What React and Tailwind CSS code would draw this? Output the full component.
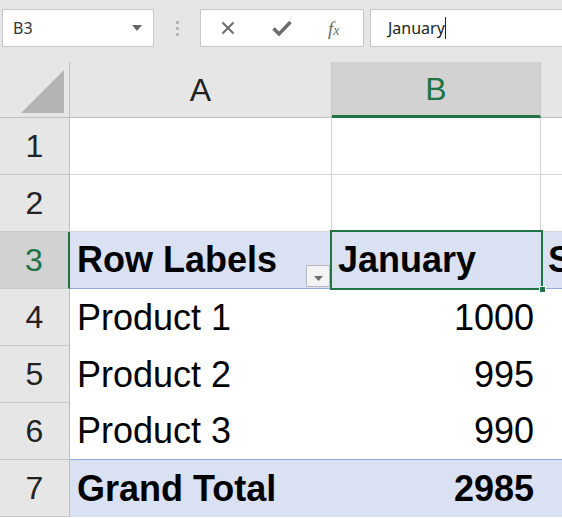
import React from "react";

const cellFont = { fontFamily: '"Liberation Sans", Arial, sans-serif' };

const RowHead = ({ n, active }) => (
  <div
    className={`flex items-center justify-center border-b border-[#c8c8c8] text-[32px] ${
      active
        ? "bg-[#d2d2d2] text-[#217346] border-r-2 border-r-[#217346]"
        : "bg-[#e6e6e6] text-[#222] border-r border-r-[#bdbdbd]"
    }`}
    style={cellFont}
  >
    {n}
  </div>
);

const FilterButton = () => (
  <div className="absolute right-[2px] bottom-[1px] w-[24px] h-[22px] bg-[#f4f4f4] border border-[#b8b8b8] flex items-end justify-center pb-[5px]">
    <svg width="9" height="5" viewBox="0 0 9 5">
      <path d="M0 0 L9 0 L4.5 5 Z" fill="#6e6e6e" />
    </svg>
  </div>
);

export default function App() {
  return (
    <div className="w-[562px] h-[518px] overflow-hidden bg-white" style={cellFont}>
      {/* Formula bar */}
      <div className="h-[62px] bg-[#e6e6e6] flex items-start pt-[9px]">
        <div className="ml-[2px] w-[152px] h-[38px] bg-white border border-[#c6c6c6] flex items-center justify-between pl-[10px] pr-[11px]">
          <span className="text-[16px] text-[#333]" style={{ fontFamily: '"Noto Sans", sans-serif' }}>
            B3
          </span>
          <svg width="10" height="6" viewBox="0 0 10 6">
            <path d="M0 0 L10 0 L5 6 Z" fill="#666" />
          </svg>
        </div>
        <div className="w-[46px] h-[38px] flex flex-col items-center justify-center gap-[3px]">
          <span className="w-[3px] h-[3px] bg-[#b5b5b5]" />
          <span className="w-[3px] h-[3px] bg-[#b5b5b5]" />
          <span className="w-[3px] h-[3px] bg-[#b5b5b5]" />
        </div>
        <div className="w-[164px] h-[38px] bg-white border border-[#c6c6c6] flex items-center">
          <svg className="ml-[20px]" width="14" height="14" viewBox="0 0 14 14">
            <path d="M1.5 1.5 L12.5 12.5 M12.5 1.5 L1.5 12.5" stroke="#6b6b6b" strokeWidth="2" />
          </svg>
          <svg className="ml-[37px]" width="20" height="16" viewBox="0 0 20 16">
            <path d="M1.5 8.5 L7 14 L18.5 2" stroke="#6b6b6b" strokeWidth="3.4" fill="none" />
          </svg>
          <span
            className="ml-[36px] text-[#6b6b6b] italic leading-none"
            style={{ fontFamily: '"Liberation Serif", serif' }}
          >
            <span className="text-[19px]">f</span>
            <span className="text-[14px]">x</span>
          </span>
        </div>
        <div className="ml-[6px] flex-1 h-[38px] bg-white border border-[#c6c6c6] border-r-0 flex items-center pl-[17px]">
          <span className="text-[16px] text-[#222]" style={{ fontFamily: '"Noto Sans", sans-serif' }}>
            January
          </span>
          <span className="w-[1px] h-[22px] bg-[#222]" />
        </div>
      </div>

      {/* Grid */}
      <div className="grid grid-cols-[70px_262px_209px_1fr] grid-rows-[56px_57px_57px_57px_57px_57px_57px_57px]">
        {/* Column headers */}
        <div className="bg-[#e6e6e6] border-r border-r-[#bdbdbd] border-b border-b-[#bdbdbd] flex items-end justify-end pr-[5px] pb-[4px]">
          <svg width="43" height="43" viewBox="0 0 43 43">
            <path d="M43 0 L43 43 L0 43 Z" fill="#b4b4b4" />
          </svg>
        </div>
        <div className="bg-[#e6e6e6] border-r border-r-[#c8c8c8] border-b border-b-[#bdbdbd] flex items-center justify-center text-[32px] text-[#222]">
          A
        </div>
        <div className="bg-[#d2d2d2] border-r border-r-[#c8c8c8] border-b-[3px] border-b-[#217346] flex items-center justify-center text-[32px] text-[#217346]">
          B
        </div>
        <div className="bg-[#e6e6e6] border-b border-b-[#bdbdbd]" />

        {/* Row 1 */}
        <RowHead n="1" />
        <div className="border-r border-b border-[#d4d4d4]" />
        <div className="border-r border-b border-[#d4d4d4]" />
        <div className="border-b border-[#d4d4d4]" />

        {/* Row 2 */}
        <RowHead n="2" />
        <div className="border-r border-b border-[#d4d4d4]" />
        <div className="border-r border-b border-[#d4d4d4]" />
        <div className="border-b border-[#d4d4d4]" />

        {/* Row 3 - pivot header */}
        <RowHead n="3" active />
        <div className="relative bg-[#d9e1f2] border-b border-[#8ea9db] flex items-center pl-[7px] text-[36px] font-bold text-black">
          Row Labels
          <FilterButton />
        </div>
        <div className="relative bg-[#d9e1f2] border-b border-[#8ea9db] flex items-center pl-[6px] text-[36px] font-bold text-black">
          January
          <div className="absolute left-[-2px] top-[-2px] right-[-2px] bottom-[-2px] border-2 border-[#217346]" />
          <div className="absolute right-[-5px] bottom-[-5px] w-[7px] h-[7px] bg-[#217346] border border-white" />
        </div>
        <div className="bg-[#d9e1f2] border-b border-[#8ea9db] flex items-center pl-[7px] text-[36px] font-bold text-black overflow-hidden whitespace-nowrap">
          Sum
        </div>

        {/* Rows 4-6 */}
        {[
          ["4", "Product 1", "1000"],
          ["5", "Product 2", "995"],
          ["6", "Product 3", "990"],
        ].map(([n, label, val]) => (
          <React.Fragment key={n}>
            <RowHead n={n} />
            <div className={`flex items-center pl-[7px] text-[36px] text-black ${n === "6" ? "border-b border-[#8ea9db]" : ""}`}>
              {label}
            </div>
            <div className={`flex items-center justify-end pr-[7px] text-[36px] text-black ${n === "6" ? "border-b border-[#8ea9db]" : ""}`}>
              {val}
            </div>
            <div className={n === "6" ? "border-b border-[#8ea9db]" : ""} />
          </React.Fragment>
        ))}

        {/* Row 7 - grand total */}
        <RowHead n="7" />
        <div className="bg-[#d9e1f2] flex items-center pl-[7px] text-[36px] font-bold text-black">
          Grand Total
        </div>
        <div className="bg-[#d9e1f2] flex items-center justify-end pr-[7px] text-[36px] font-bold text-black">
          2985
        </div>
        <div className="bg-[#d9e1f2]" />
      </div>
    </div>
  );
}
